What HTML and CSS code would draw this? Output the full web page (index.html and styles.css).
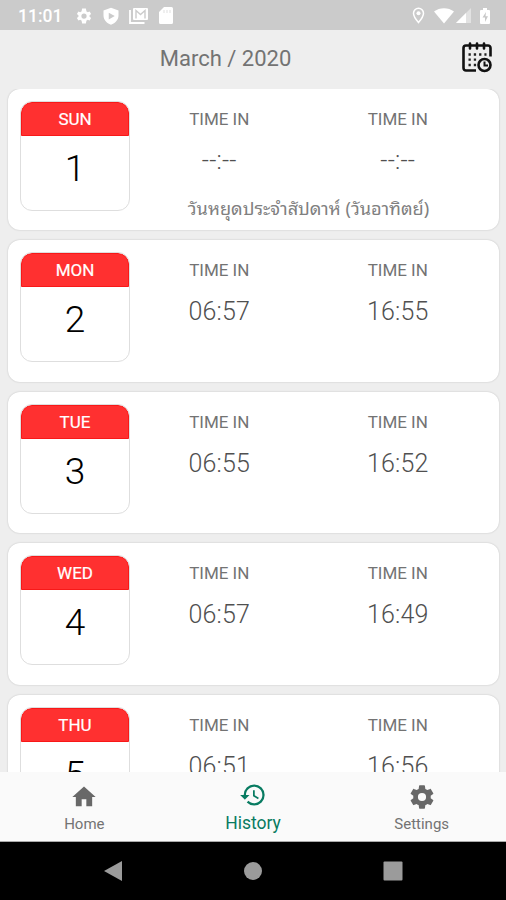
FILE: index.html
```html
<!DOCTYPE html>
<html lang="en">
<head>
    <meta charset="UTF-8">
    <meta name="viewport" content="width=device-width, initial-scale=1.0">
    <title>History</title>
    <link rel="stylesheet" href="styles.css">
</head>
<body>

    <div class="status-bar">
        <span class="clock">11:01</span>
        <div class="status-left">
            <svg width="18" height="18" viewBox="0 0 24 24"><path d="M19.4 13a7.8 7.8 0 0 0 0-2l2.1-1.7-2-3.4-2.5 1a7 7 0 0 0-1.7-1L14.500 2h-5l-.8 3.900a7 7 0 0 0-1.700 1l-2.500-1-2 3.400L4.600 11a7.800 7.800 0 0 0 0 2l-2.100 1.700 2 3.400 2.500-1a7 7 0 0 0 1.700 1L9.500 22h5l.8-3.900a7 7 0 0 0 1.700-1l2.500 1 2-3.400zM12 15.500a3.500 3.500 0 1 1 0-7 3.500 3.500 0 0 1 0 7z" fill-rule="evenodd"/></svg>
            <svg width="18" height="18" viewBox="0 0 24 24"><path d="M12 1 2 4.500V11c0 6 4 10.500 10 12.500C18 21.500 22 17 22 11V4.500zM9 7.500l8 4.500-8 4.500z" fill-rule="evenodd"/></svg>
            <svg class="mail" width="20" height="18" viewBox="0 0 20 18"><path d="M1 3v13h14.500" fill="none" stroke="#fff" stroke-width="1.800"/><path d="M5 1h13a1 1 0 0 1 1 1v10a1 1 0 0 1-1 1H5a1 1 0 0 1-1-1V2a1 1 0 0 1 1-1z"/><path d="M7 11.500V3.500l4.500 4 4.500-4v8" fill="none" stroke="#cbcbcb" stroke-width="1.400"/></svg>
            <svg class="sd" width="14" height="17" viewBox="0 0 14 17"><path d="M5 0h7.500A1.500 1.500 0 0 1 14 1.500v14a1.500 1.500 0 0 1-1.500 1.500h-11A1.500 1.500 0 0 1 0 15.500V5z"/><path d="M5 3v3M8 3v3M11 3v3" stroke="#e4e4e4" stroke-width="1.200"/></svg>
        </div>
        <div class="status-right">
            <svg width="13" height="17" viewBox="0 0 13 17"><path d="M6.500 1.200a5 5 0 0 0-5 5c0 3.500 5 9.300 5 9.300s5-5.800 5-9.300a5 5 0 0 0-5-5z" fill="none" stroke="#fff" stroke-width="1.500"/><circle cx="6.500" cy="6.200" r="2"/></svg>
            <svg class="wifi" width="20" height="16" viewBox="0 0 20 16"><path d="M0 3.500C5.500-1 14.500-1 20 3.500L10 15.500z"/></svg>
            <svg class="signal" width="15" height="15" viewBox="0 0 15 15"><path d="M15 0v15H0z" opacity=".45"/><path d="M10 5v10H0z"/></svg>
            <svg class="battery" width="10" height="16" viewBox="0 0 10 16"><path d="M3 0h4v2h2a1 1 0 0 1 1 1v12a1 1 0 0 1-1 1H1a1 1 0 0 1-1-1V3a1 1 0 0 1 1-1h2z"/><path d="M6 4 2.500 9.500H5V14l3-5.800H5.500z" fill="#c8c8c8"/></svg>
        </div>
    </div>

    <header class="header">
        <h1>March / 2020</h1>
        <svg class="calendar-icon" width="30" height="31" viewBox="0 0 30 31">
            <g fill="none" stroke="#111" stroke-width="2.600">
                <path d="M14 28.500H4a2.500 2.500 0 0 1-2.500-2.500V6A2.500 2.500 0 0 1 4 3.500h22A2.500 2.500 0 0 1 28.500 6v8.500"/>
                <path d="M8 1.500v5M15 1.500v5M22 1.500v5" stroke-linecap="round"/>
                <circle cx="22.500" cy="23" r="6"/>
                <path d="M22.500 19.500V23.500H26" stroke-width="2"/>
            </g>
            <path d="M6.500 12.500h18M6.500 17.700h8M6.500 23h8" stroke="#222" stroke-width="2.300" stroke-dasharray="2.300 3"/>
        </svg>
    </header>

    <main class="days">
        <section class="card">
            <div class="date"><div class="weekday">SUN</div><div class="number">1</div></div>
            <div class="times">
                <div class="label">TIME IN</div><div class="label">TIME IN</div>
                <div class="time empty">--:--</div><div class="time empty">--:--</div>
                <div class="note" lang="th">วันหยุดประจำสัปดาห์ (วันอาทิตย์)</div>
            </div>
        </section>

        <section class="card">
            <div class="date"><div class="weekday">MON</div><div class="number">2</div></div>
            <div class="times">
                <div class="label">TIME IN</div><div class="label">TIME IN</div>
                <div class="time">06:57</div><div class="time">16:55</div>
            </div>
        </section>

        <section class="card">
            <div class="date"><div class="weekday">TUE</div><div class="number">3</div></div>
            <div class="times">
                <div class="label">TIME IN</div><div class="label">TIME IN</div>
                <div class="time">06:55</div><div class="time">16:52</div>
            </div>
        </section>

        <section class="card">
            <div class="date"><div class="weekday">WED</div><div class="number">4</div></div>
            <div class="times">
                <div class="label">TIME IN</div><div class="label">TIME IN</div>
                <div class="time">06:57</div><div class="time">16:49</div>
            </div>
        </section>

        <section class="card">
            <div class="date"><div class="weekday">THU</div><div class="number">5</div></div>
            <div class="times">
                <div class="label">TIME IN</div><div class="label">TIME IN</div>
                <div class="time">06:51</div><div class="time">16:56</div>
            </div>
        </section>
    </main>

    <nav class="tabs">
        <a class="tab">
            <svg width="28" height="28" viewBox="0 0 24 24"><path d="M10 20v-6h4v6h5v-8h3L12 3 2 12h3v8z"/></svg>
            <span>Home</span>
        </a>
        <a class="tab active">
            <svg width="28" height="28" viewBox="0 0 24 24"><path d="M13 3a9 9 0 0 0-9 9H1l3.890 3.890.07.14L9 12H6c0-3.870 3.130-7 7-7s7 3.130 7 7-3.130 7-7 7c-1.930 0-3.680-.79-4.940-2.060l-1.420 1.420A8.954 8.954 0 0 0 13 21a9 9 0 0 0 0-18zm-1 5v5l4.280 2.540.72-1.210-3.500-2.080V8H12z"/></svg>
            <span>History</span>
        </a>
        <a class="tab">
            <svg width="28" height="28" viewBox="0 0 24 24"><path d="M19.430 12.980c.04-.32.07-.64.07-.98s-.03-.66-.07-.98l2.110-1.650c.19-.15.24-.42.12-.64l-2-3.460c-.12-.22-.39-.3-.61-.22l-2.490 1c-.52-.4-1.080-.73-1.690-.98l-.38-2.650A.488.488 0 0 0 14 2h-4c-.25 0-.46.18-.49.42l-.38 2.650c-.61.25-1.170.59-1.690.98l-2.490-1c-.23-.09-.49 0-.61.22l-2 3.460c-.13.22-.07.49.12.64l2.110 1.650c-.04.32-.07.65-.07.98s.03.66.07.98l-2.110 1.650c-.19.15-.24.42-.12.64l2 3.460c.12.22.39.3.61.22l2.490-1c.52.4 1.080.73 1.690.98l.38 2.650c.03.24.24.42.49.42h4c.25 0 .46-.18.49-.42l.38-2.650c.61-.25 1.170-.59 1.690-.98l2.490 1c.23.09.49 0 .61-.22l2-3.460c.12-.22.07-.49-.12-.64l-2.110-1.650zM12 15.500a3.500 3.500 0 1 1 0-7 3.500 3.500 0 0 1 0 7z"/></svg>
            <span>Settings</span>
        </a>
    </nav>

    <div class="system-nav">
        <svg width="20" height="22" viewBox="0 0 20 22"><path d="M19 1v20L1 11z"/></svg>
        <svg width="20" height="22" viewBox="0 0 20 22"><circle cx="10" cy="11" r="9"/></svg>
        <svg width="20" height="22" viewBox="0 0 20 22"><rect x="0.500" y="1.500" width="19" height="19" rx="1"/></svg>
    </div>

</body>
</html>
```
FILE: styles.css
```css
/* --- Basic Setup --- */
* { box-sizing: border-box; }

body {
    margin: 0;
    height: 900px;
    display: flex;
    flex-direction: column;
    overflow: hidden;
    background-color: #eeeeee;
    color: #737373;
    font-family: Roboto, "Noto Sans Thai", "Noto Sans", sans-serif;
}

svg { display: block; flex: none; }

/* --- Status Bar --- */
.status-bar {
    flex: none;
    height: 30px;
    padding: 1px 16px 0 18px;
    display: flex;
    align-items: center;
    background-color: #cbcbcb;
    color: #fff;
    fill: #fff;
}

.clock { width: 57px; font-size: 17.5px; font-weight: 500; }
.status-left, .status-right { display: flex; align-items: center; }
.status-left { gap: 9px; }
.sd { margin-left: 1px; }
.status-right { margin-left: auto; }
.wifi { margin-left: 9px; }
.signal { margin-left: 2px; }
.battery { margin-left: 9px; }

/* --- Header --- */
.header {
    flex: none;
    height: 58.5px;
    padding: 0 14px 3px 46px;
    display: flex;
    align-items: center;
}

h1 {
    flex: 1;
    margin: 0;
    padding: 1px 57px 0 0;
    text-align: center;
    font-size: 22px;
    font-weight: 400;
}

/* --- Day Cards --- */
.days {
    flex: 1;
    min-height: 0;
    overflow: hidden;
    padding: 0 7px 0 8px;
    display: flex;
    flex-direction: column;
    gap: 10px;
}

.card {
    flex: none;
    height: 141.5px;
    padding: 12px;
    display: flex;
    background-color: #fff;
    border-radius: 12px;
    box-shadow: 0 0 2px rgba(0, 0, 0, 0.2);
}

.date {
    width: 110px;
    height: 110px;
    overflow: hidden;
    border: 1px solid #dedede;
    border-radius: 12px;
    color: #000;
    text-align: center;
}

.weekday {
    height: 34px;
    background-color: #ff3030;
    border: 1px solid #f81818;
    border-radius: 11px 11px 0 0;
    line-height: 33px;
    color: #fff;
    font-size: 17px;
    font-weight: 400;
    -webkit-text-stroke: 0.2px #fff;
}

.number { font-size: 37px; font-weight: 300; line-height: 66px; }

.times {
    flex: 1;
    display: grid;
    grid-template-columns: 1fr 1fr;
    grid-template-rows: 38px 43px auto;
    align-content: start;
    text-align: center;
}

.label { font-size: 17px; line-height: 37px; }
.time { font-size: 25px; font-weight: 300; line-height: 44px; letter-spacing: 0.2px; color: #505050; }
.note {
    grid-column: 1 / 3;
    font-family: "Noto Sans Thai Looped", "Noto Looped Thai", Loma, Waree, Garuda, Roboto, sans-serif;
    font-size: 18.2px;
    line-height: 49px;
    color: #808080;
}

/* --- Bottom Tabs --- */
.tabs {
    flex: none;
    height: 70.5px;
    display: flex;
    background-color: #fafafa;
    border-bottom: 1px solid #aaa;
}

.tab {
    flex: 1;
    padding-top: 11px;
    display: flex;
    flex-direction: column;
    align-items: center;
    gap: 4px;
    font-size: 15px;
    line-height: 18px;
    fill: #686868;
}

.tab.active {
    padding-top: 9px;
    color: #087b61;
    fill: #087b61;
    font-size: 17.5px;
    line-height: 21px;
}

/* --- System Navigation --- */
.system-nav {
    flex: none;
    height: 58px;
    padding: 0 103px;
    display: flex;
    justify-content: space-between;
    align-items: center;
    background-color: #000;
    fill: #9b9b9b;
}
```
